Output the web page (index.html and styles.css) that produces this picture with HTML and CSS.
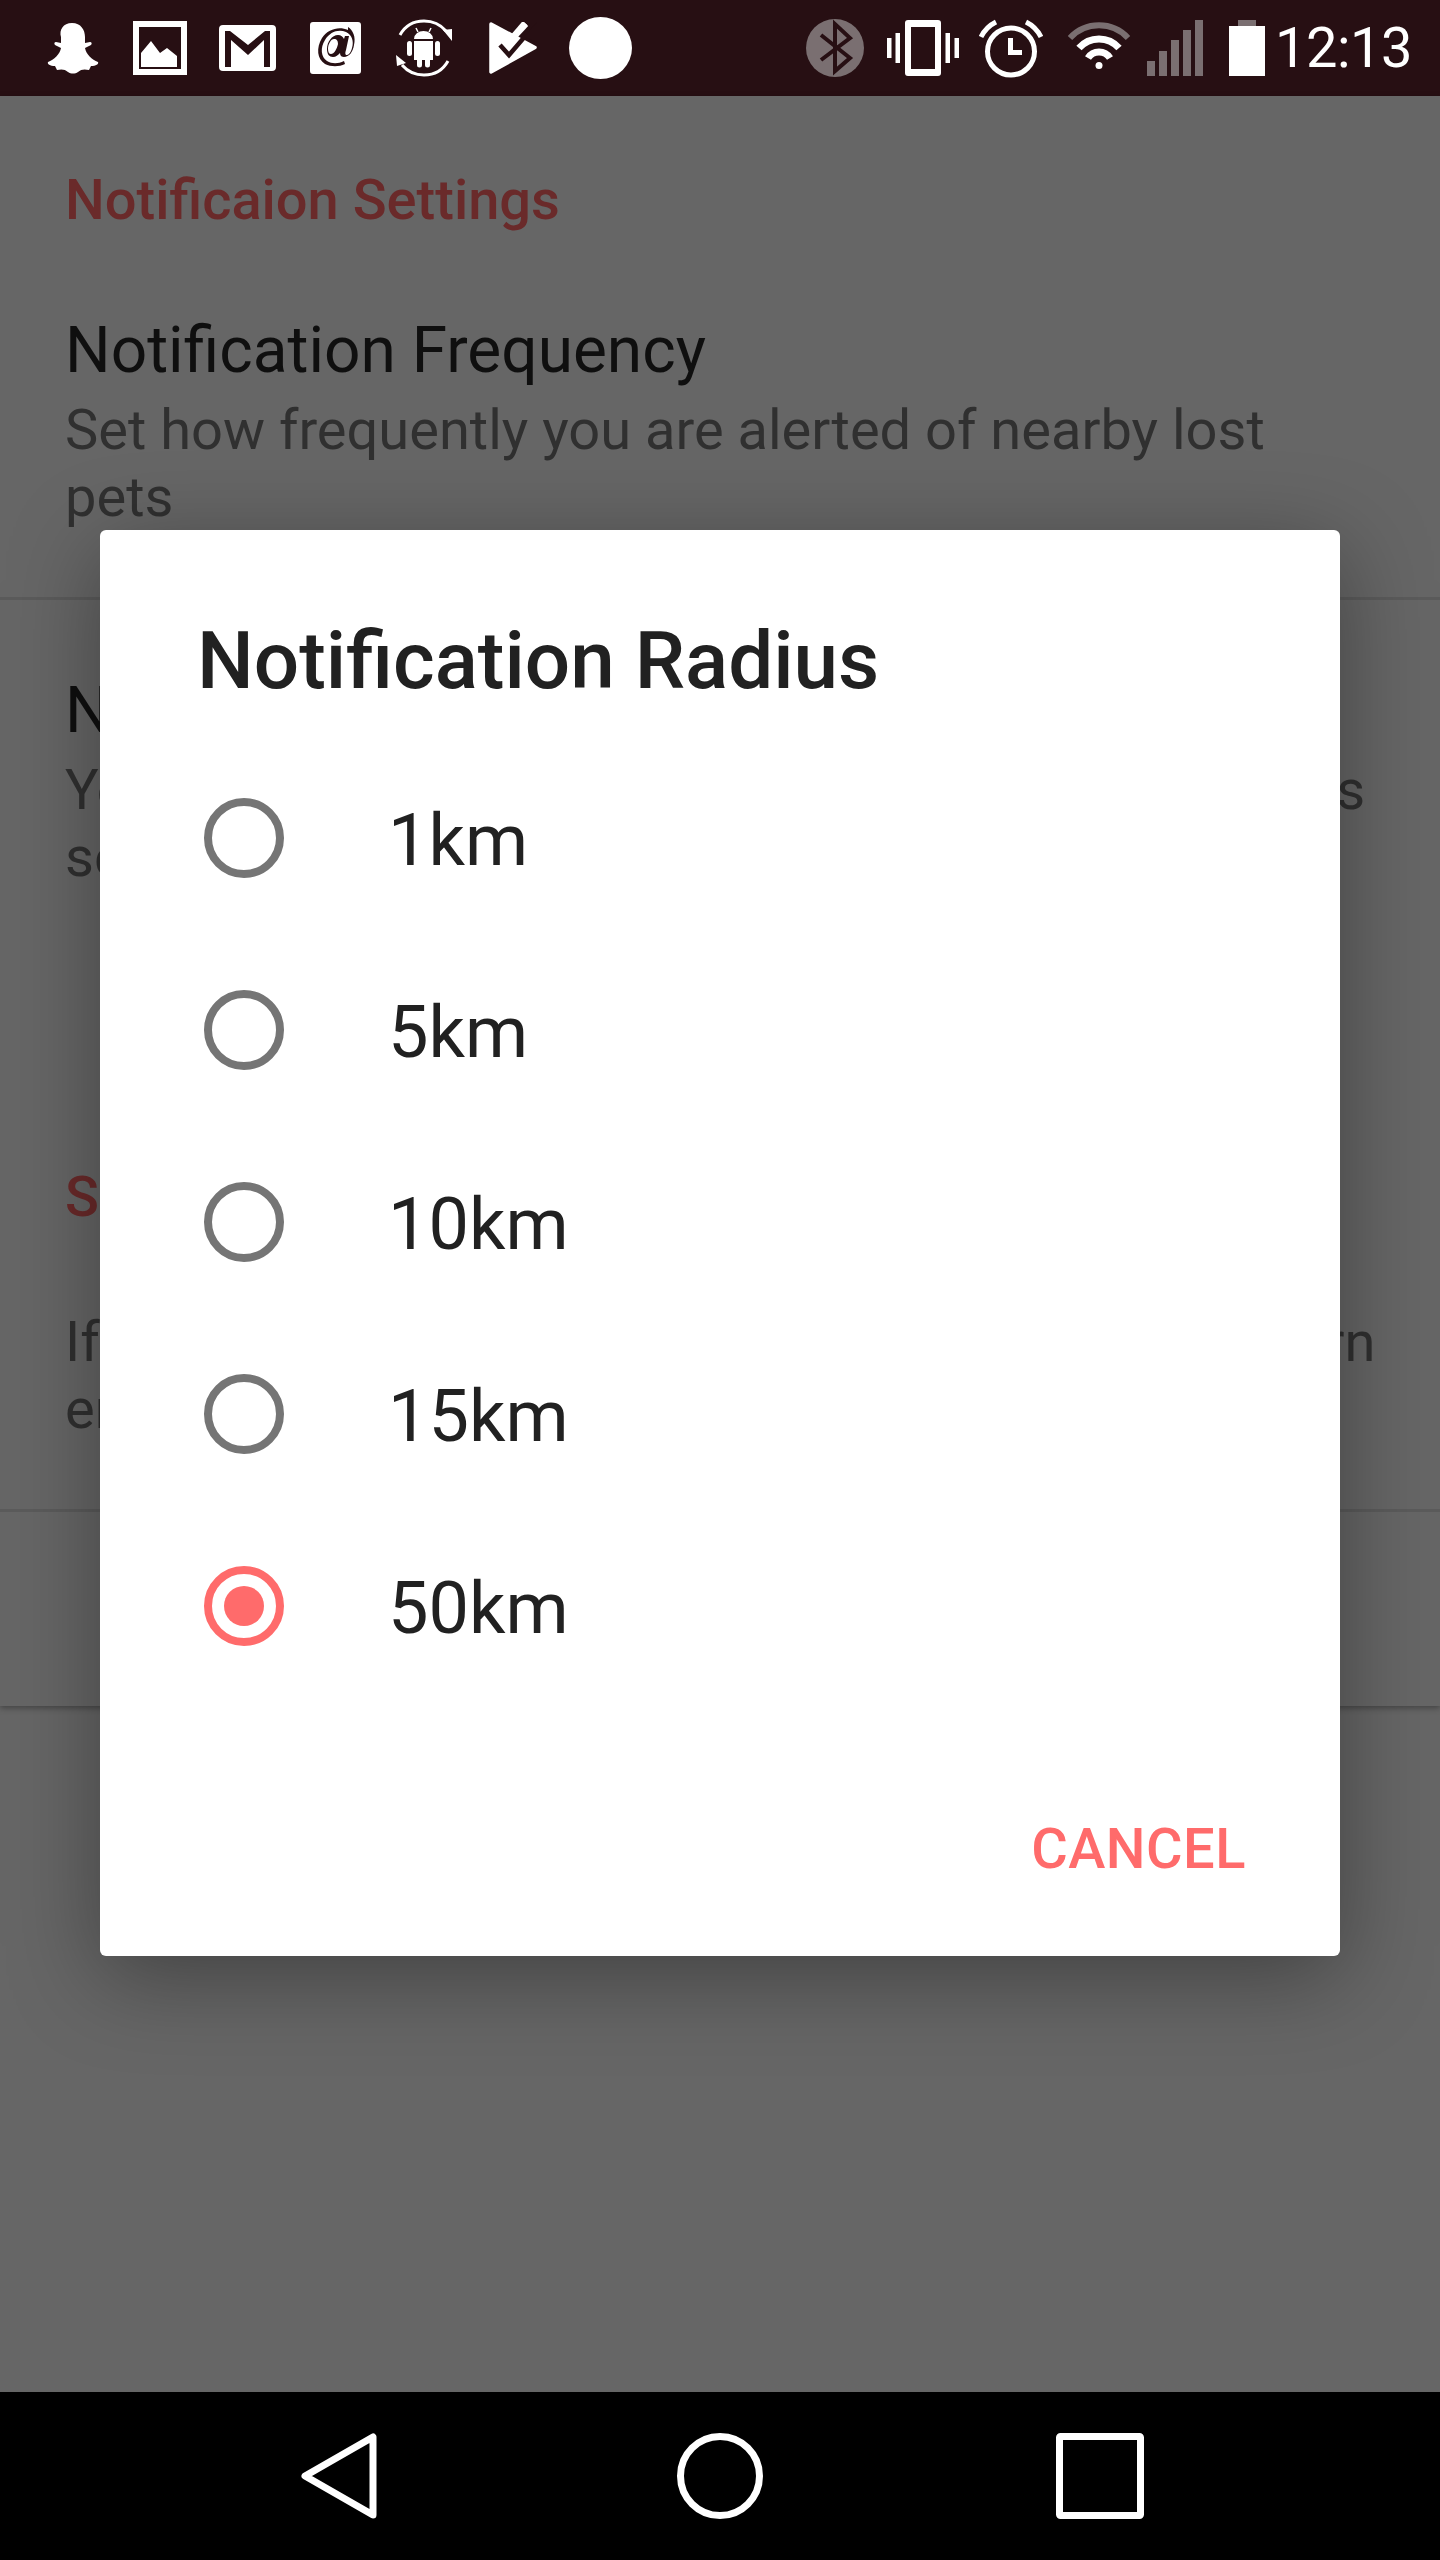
FILE: index.html
```html
<!DOCTYPE html>
<html lang="en">
<head>
    <meta charset="UTF-8">
    <meta name="viewport" content="width=device-width, initial-scale=1.0">
    <title>Notification Radius</title>
    <link rel="stylesheet" href="styles.css">
</head>
<body>
    <div class="status-bar">
        <div class="status-left">
            <svg class="ic-ghost" viewBox="0 0 54 52"><path d="M27 1c9 0 13 7 13 14v6l5-1c2 0 2 2 1 3l-6 3c1 6 7 12 13 14 1 2-2 4-7 4l-2 4c-4-1-8-1-11 2-3 2-7 2-10 0-3-3-7-3-11-2l-2-4c-5 0-8-2-7-4 6-2 12-8 13-14l-6-3c-1-1-1-3 1-3l5 1v-6C14 8 18 1 27 1z" fill="#fff"/></svg>
            <svg class="ic-image" viewBox="0 0 54 54"><path fill-rule="evenodd" d="M0 0h54v54H0zM6 6v42h42V6z" fill="#fff"/><path d="M8 46V32l10-12 9 12 7-5 10 8v11z" fill="#fff"/></svg>
            <svg class="ic-gmail" viewBox="0 0 57 46"><path fill-rule="evenodd" d="M4 0h49a4 4 0 0 1 4 4v38a4 4 0 0 1-4 4H4a4 4 0 0 1-4-4V4a4 4 0 0 1 4-4zM6 6v36h6V15l17 15 16-15v27h6V6h-5L29 20 11 6z" fill="#fff"/></svg>
            <svg class="ic-at" viewBox="0 0 51 52"><path fill-rule="evenodd" d="M3 0h45a3 3 0 0 1 3 3v46a3 3 0 0 1-3 3H3a3 3 0 0 1-3-3V3a3 3 0 0 1 3-3zM38 8c-9-4-20-1-26 8-6 10-5 21 3 26 6 3 14 3 20 0l-1-3c-6 3-12 3-17 0-6-4-7-13-2-21 5-8 13-11 21-8 6 3 8 9 6 16-1 4-3 7-5 7-2 0-2-2-1-5l3-14h-4l-1 3c-1-2-3-4-6-4-6 0-11 7-11 14 0 5 2 8 6 8 3 0 5-2 7-4 0 3 2 4 4 4 5 0 9-5 10-12 2-8-1-15-6-18zM24 17c3 0 4 2 4 5-1 5-4 10-7 10-2 0-3-2-3-5 0-5 3-10 6-10z" fill="#fff"/></svg>
            <svg class="ic-android" viewBox="0 0 56 58"><g fill="none" stroke="#fff" stroke-width="3"><path d="M4 16C9 7 18 2 28 2c9 0 16 3 22 10"/><path d="M52 42c-5 9-14 14-24 14-9 0-16-3-22-10"/></g><path d="M56 22l-9-11 9-1zM0 36l10 8-9 3z" fill="#fff"/><path d="M18 20a9.500 8 0 0 1 19 0zM18 22h19v19h-3v5a2.500 2.500 0 0 1-5 0v-5h-3v5a2.500 2.500 0 0 1-5 0v-5h-3z" fill="#fff"/><rect x="11" y="22" width="5" height="15" rx="2.500" fill="#fff"/><rect x="39" y="22" width="5" height="15" rx="2.500" fill="#fff"/><path d="M22 13l-2-4M33 13l2-4" stroke="#fff" stroke-width="1.500"/></svg>
            <svg class="ic-check" viewBox="0 0 48 52"><path d="M2 2l44 23.500L2 50z" fill="#fff" stroke="#fff" stroke-width="3.500" stroke-linejoin="round"/><path d="M24 16L37 2" stroke="#fff" stroke-width="6"/><path d="M11 23l9 10 18-21 10 8-10-8" fill="none" stroke="#270f13" stroke-width="4.500"/><path d="M35 15l13-15v20z" fill="#270f13"/><path d="M24 15L36 1" stroke="#fff" stroke-width="6"/></svg>
            <span class="ic-dot"></span>
        </div>
        <div class="status-right">
            <svg class="ic-bt" viewBox="0 0 58 58"><circle cx="29" cy="29" r="29" fill="#7a6f71"/><path d="M15 16l29 23-15 13V5l15 14-29 22" fill="none" stroke="#270f13" stroke-width="4"/></svg>
            <svg class="ic-vibrate" viewBox="0 0 72 56"><path fill-rule="evenodd" d="M21 0h30a3 3 0 0 1 3 3v50a3 3 0 0 1-3 3H21a3 3 0 0 1-3-3V3a3 3 0 0 1 3-3zM24 7v42h24V7z" fill="#fff"/><path d="M0 18h4.500v20H0zM8.500 13H13v30H8.500zM58.500 13H63v30h-4.500zM67.500 18H72v20h-4.500z" fill="#fff"/></svg>
            <svg class="ic-alarm" viewBox="0 0 64 60"><circle cx="32" cy="33.500" r="23.500" fill="none" stroke="#fff" stroke-width="5"/><path d="M29 20h5v12h9v5H29z" fill="#fff"/><path d="M2 19A33 33 0 0 1 17 4M47 4a33 33 0 0 1 15 15" fill="none" stroke="#fff" stroke-width="5"/></svg>
            <svg class="ic-wifi" viewBox="0 0 66 48"><path d="M4 16a39.500 39.500 0 0 1 58 0" fill="none" stroke="#7a6f71" stroke-width="6"/><path d="M13 26a26.500 26.500 0 0 1 40 0M22 36a13 13 0 0 1 22 0" fill="none" stroke="#fff" stroke-width="7"/><circle cx="33" cy="43.500" r="3.500" fill="#fff"/></svg>
            <svg class="ic-signal" viewBox="0 0 56 56"><path d="M0 41h8v15H0zM12 31h8v25h-8zM24 20h8v36h-8zM36 10h8v46h-8zM48 0h8v56h-8z" fill="#7a6f71"/></svg>
            <svg class="ic-battery" viewBox="0 0 36 56"><path d="M9 0h18v6H9z" fill="#7a6f71"/><path d="M0 6h36v50H0z" fill="#fff"/></svg>
            <span class="clock">12:13</span>
        </div>
    </div>

    <div class="screen">
        <div class="prefs">
            <section class="pref-group">
                <h2 class="group-title">Notificaion Settings</h2>
                <div class="pref pref-freq">
                    <div class="pref-title">Notification Frequency</div>
                    <div class="pref-summary">Set how frequently you are alerted of nearby lost pets</div>
                </div>
                <div class="pref pref-radius">
                    <div class="pref-title">Notification Radius</div>
                    <div class="pref-summary">You will only be alerted of lost pets inside this radius set from your home</div>
                </div>
            </section>
            <section class="pref-group">
                <h2 class="group-title">Silent Mode</h2>
                <div class="pref pref-silent">
                    <div class="pref-summary">If you would rather not have push alerts, you can turn email alerts on instead</div>
                </div>
                <div class="pref pref-empty"></div>
            </section>
        </div>

        <div class="dialog-wrap">
            <div class="dialog">
                <h1 class="dialog-title">Notification Radius</h1>
                <div class="option"><span class="radio"></span><span class="option-label">1km</span></div>
                <div class="option"><span class="radio"></span><span class="option-label">5km</span></div>
                <div class="option"><span class="radio"></span><span class="option-label">10km</span></div>
                <div class="option"><span class="radio"></span><span class="option-label">15km</span></div>
                <div class="option"><span class="radio radio-on"></span><span class="option-label">50km</span></div>
                <div class="dialog-actions"><span class="cancel">CANCEL</span></div>
            </div>
        </div>
    </div>

    <div class="nav-bar">
        <svg class="nav-icon" viewBox="0 0 78 86"><path d="M72 4v78L4 43z" fill="none" stroke="#fff" stroke-width="7" stroke-linejoin="round"/></svg>
        <svg class="nav-icon" viewBox="0 0 88 86"><circle cx="44" cy="43" r="39.500" fill="none" stroke="#fff" stroke-width="7"/></svg>
        <svg class="nav-icon" viewBox="0 0 88 86"><rect x="3.500" y="3.500" width="81" height="79" rx="1" fill="none" stroke="#fff" stroke-width="7"/></svg>
    </div>
</body>
</html>
```

FILE: styles.css
```css
body {
    margin: 0;
    width: 1440px;
    height: 2560px;
    display: flex;
    flex-direction: column;
    overflow: hidden;
    font-family: Roboto, "Liberation Sans", sans-serif;
    background-color: #666;
}

/* status bar */
.status-bar {
    height: 96px;
    flex: none;
    display: flex;
    align-items: center;
    justify-content: space-between;
    background-color: #270f13;
    color: #fff;
}
.status-left, .status-right {
    display: flex;
    align-items: center;
}
.status-left {
    padding-left: 45px;
}
.status-right {
    padding-right: 28px;
}
.ic-ghost { width: 54px; height: 52px; margin-right: 34px; }
.ic-image { width: 54px; height: 54px; margin-right: 32px; }
.ic-gmail { width: 57px; height: 46px; margin-right: 34px; }
.ic-at { width: 51px; height: 52px; margin-right: 35px; }
.ic-android { width: 56px; height: 58px; margin-right: 37px; }
.ic-check { width: 48px; height: 52px; margin-right: 32px; }
.ic-dot {
    width: 63px;
    height: 62px;
    border-radius: 50%;
    background-color: #fff;
}
.ic-bt { width: 58px; height: 58px; margin-right: 23px; }
.ic-vibrate { width: 72px; height: 56px; margin-right: 20px; }
.ic-alarm { width: 64px; height: 60px; margin-right: 23px; }
.ic-wifi { width: 66px; height: 48px; margin-right: 15px; margin-bottom: 4px; }
.ic-signal { width: 56px; height: 56px; margin-right: 26px; }
.ic-battery { width: 36px; height: 56px; margin-right: 10px; }
.clock {
    font-size: 56px;
    font-weight: 400;
    line-height: 56px;
    letter-spacing: -0.5px;
}

/* settings behind the dialog */
.screen {
    position: relative;
    flex: 1;
}
.prefs {
    height: 1610px;
    box-shadow: 0 2px 6px rgba(0, 0, 0, 0.35);
}
.group-title {
    margin: 0;
    padding: 0 65px;
    font-size: 56px;
    line-height: 66px;
    font-weight: 500;
    color: #6a2a2a;
}
.pref-group:first-child .group-title {
    padding-top: 71px;
}
.pref {
    box-sizing: border-box;
    padding: 0 60px 0 65px;
    border-bottom: 3px solid #5b5b5b;
}
.pref-title {
    margin-bottom: 8px;
    font-size: 64px;
    line-height: 76px;
    color: #0f0f0f;
}
.pref-summary {
    font-size: 56px;
    line-height: 67px;
    color: #303030;
}
.pref-freq {
    padding-top: 80px;
    height: 367px;
}
.pref-radius {
    padding-top: 73px;
    height: 564px;
    border-bottom: 0;
}
.pref-silent {
    padding-top: 79px;
    height: 282px;
}
.pref-empty {
    height: 194px;
    border-bottom: 0;
}

/* dialog */
.dialog-wrap {
    position: absolute;
    top: 434px;
    left: 100px;
    width: 1240px;
}
.dialog {
    box-sizing: border-box;
    height: 1426px;
    padding: 84px 94px 0 97px;
    border-radius: 6px;
    background-color: #fff;
    color: #212121;
    box-shadow: 0 20px 90px rgba(0, 0, 0, 0.36);
}
.dialog-title {
    margin: 0 0 34px;
    font-size: 80px;
    line-height: 94px;
    font-weight: 500;
}
.option {
    display: flex;
    align-items: center;
    height: 192px;
    font-size: 72px;
}
.option-label {
    padding-top: 4px;
}
.radio {
    box-sizing: border-box;
    width: 80px;
    height: 80px;
    margin: 0 104px 0 7px;
    border: 8px solid #757575;
    border-radius: 50%;
    display: flex;
    align-items: center;
    justify-content: center;
}
.radio-on {
    border-color: #ff6b6b;
}
.radio-on::after {
    content: "";
    width: 40px;
    height: 40px;
    border-radius: 50%;
    background-color: #ff6b6b;
}
.dialog-actions {
    display: flex;
    justify-content: flex-end;
    margin-top: 114px;
}
.cancel {
    font-size: 56px;
    line-height: 66px;
    font-weight: 500;
    letter-spacing: 0.5px;
    color: #ff6b6b;
}

/* nav bar */
.nav-bar {
    height: 168px;
    flex: none;
    display: grid;
    grid-template-columns: repeat(3, 380px);
    justify-content: center;
    justify-items: center;
    align-items: center;
    background-color: #000;
}
.nav-icon {
    height: 86px;
    width: 88px;
}
```
